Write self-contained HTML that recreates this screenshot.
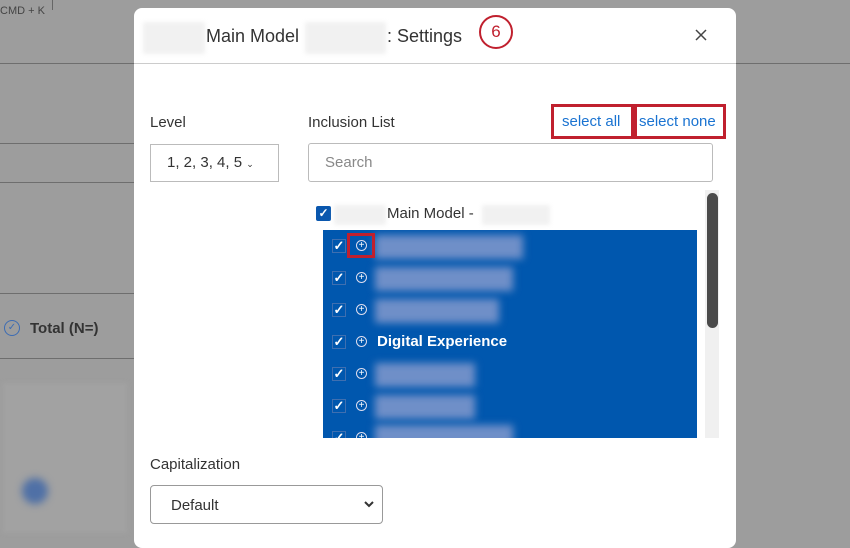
<!DOCTYPE html>
<html><head><style>
*{box-sizing:border-box;margin:0;padding:0}
body{width:850px;height:533px;overflow:hidden;background:#9d9d9d;font-family:"Liberation Sans",sans-serif;position:relative;color:#333}
.a{position:absolute}
.hl{position:absolute;height:1px;background:#6e6e6e}
.blur{position:absolute;background:#f1f1f1;filter:blur(2px)}
.modal{position:absolute;left:134px;top:8px;width:602px;height:540px;background:#fff;border-radius:8px}
.row{position:absolute;left:0;height:32px;width:374px}
.cb{position:absolute;left:9px;width:14px;height:14px;border:1px solid #3f6fb0;color:#fff;font-size:13px;line-height:12px;text-align:center;font-weight:bold}
.pl{position:absolute;left:33px;width:11px;height:11px;border:1px solid #dde;border-radius:50%;color:#fff;font-size:10px;line-height:9px;text-align:center}
.bt{position:absolute;left:52px;height:24px;background:#6f8fc8;filter:blur(4px)}
</style></head><body>
<div class="a" style="left:0;top:5px;font-size:11px;color:#444">CMD + K</div>
<div class="a" style="left:52px;top:0;width:1px;height:10px;background:#666"></div>
<div class="hl" style="left:0;top:63px;width:850px"></div>
<div class="hl" style="left:0;top:143px;width:134px"></div>
<div class="hl" style="left:0;top:182px;width:134px"></div>
<div class="hl" style="left:0;top:293px;width:134px"></div>
<div class="hl" style="left:0;top:358px;width:134px"></div>
<div class="a" style="left:4px;top:320px;width:16px;height:16px;border:1.5px solid #3d6cb3;border-radius:50%;color:#3d6cb3;font-size:10px;line-height:13px;text-align:center">✓</div>
<div class="a" style="left:30px;top:320px;font-size:15px;font-weight:bold;color:#333">Total (N=)</div>
<div class="a" style="left:3px;top:383px;width:124px;height:150px;background:#a2a2a2;filter:blur(2px)"></div>
<div class="a" style="left:22px;top:478px;width:26px;height:26px;border-radius:50%;background:#4f70a6;filter:blur(4px)"></div>
<div class="modal">
 <div class="blur" style="left:9px;top:14px;width:62px;height:32px"></div>
 <div class="a" style="left:72px;top:18px;font-size:18px;color:#333">Main Model</div>
 <div class="blur" style="left:171px;top:14px;width:81px;height:32px"></div>
 <div class="a" style="left:253px;top:18px;font-size:18px;color:#333">: Settings</div>
 <div class="a" style="left:345px;top:7px;width:34px;height:34px;border:2px solid #c0202e;border-radius:50%;color:#c0202e;font-size:17px;text-align:center;line-height:30px">6</div>
 <svg class="a" style="left:561px;top:21px" width="12" height="12"><path d="M1 1L11 11M11 1L1 11" stroke="#444" stroke-width="1.5"/></svg>
 <div class="a" style="left:0;top:55px;width:602px;height:1px;background:#ccc"></div>
 <div class="a" style="left:16px;top:106px;font-size:15px;color:#333">Level</div>
 <div class="a" style="left:16px;top:136px;width:129px;height:38px;border:1px solid #bbb;font-size:15px;padding:9px 0 0 16px;color:#333">1, 2, 3, 4, 5 <span style="font-size:9px">⌄</span></div>
 <div class="a" style="left:174px;top:106px;font-size:15px;color:#333">Inclusion List</div>
 <div class="a" style="left:417px;top:96px;width:83px;height:35px;border:3px solid #c0202e;color:#1a73d1;font-size:15px;padding:6px 0 0 8px">select all</div>
 <div class="a" style="left:500px;top:96px;width:92px;height:35px;border:3px solid #c0202e;color:#1a73d1;font-size:15px;padding:6px 0 0 2px;white-space:nowrap">select none</div>
 <div class="a" style="left:174px;top:135px;width:405px;height:39px;border:1px solid #bbb;border-radius:3px;font-size:15px;color:#888;padding:10px 0 0 16px">Search</div>
 <div class="a" style="left:182px;top:198px;width:15px;height:15px;background:#0a57ae;border-radius:2px;color:#fff;font-size:12px;line-height:15px;text-align:center;font-weight:bold">✓</div>
 <div class="blur" style="left:200px;top:197px;width:52px;height:20px"></div>
 <div class="a" style="left:253px;top:197px;font-size:15px;color:#333">Main Model -</div>
 <div class="blur" style="left:348px;top:197px;width:68px;height:20px"></div>
 <div class="a" style="left:571px;top:182px;width:14px;height:248px;background:#f0f0f0"></div>
 <div class="a" style="left:573px;top:185px;width:11px;height:135px;background:#4a4a4a;border-radius:6px"></div>
 <div class="a" style="left:189px;top:222px;width:374px;height:208px;background:#0057ae;overflow:hidden">
  <div class="row" style="top:0"><div class="cb" style="top:9px">✓</div><div class="pl" style="top:10px">+</div><div class="bt" style="top:5px;width:148px"></div></div>
  <div class="row" style="top:32px"><div class="cb" style="top:9px">✓</div><div class="pl" style="top:10px">+</div><div class="bt" style="top:5px;width:138px"></div></div>
  <div class="row" style="top:64px"><div class="cb" style="top:9px">✓</div><div class="pl" style="top:10px">+</div><div class="bt" style="top:5px;width:124px"></div></div>
  <div class="row" style="top:96px"><div class="cb" style="top:9px">✓</div><div class="pl" style="top:10px">+</div><div class="a" style="left:54px;top:7px;color:#fff;font-size:15px;font-weight:bold">Digital Experience</div></div>
  <div class="row" style="top:128px"><div class="cb" style="top:9px">✓</div><div class="pl" style="top:10px">+</div><div class="bt" style="top:5px;width:100px"></div></div>
  <div class="row" style="top:160px"><div class="cb" style="top:9px">✓</div><div class="pl" style="top:10px">+</div><div class="bt" style="top:5px;width:100px"></div></div>
  <div class="row" style="top:192px"><div class="cb" style="top:9px">✓</div><div class="pl" style="top:10px">+</div><div class="bt" style="top:3px;width:138px"></div></div>
 </div>
 <div class="a" style="left:213px;top:225px;width:28px;height:25px;border:3px solid #c0202e"></div>
 <div class="a" style="left:16px;top:448px;font-size:15px;color:#333">Capitalization</div>
 <div class="a" style="left:16px;top:477px;width:233px;height:39px;border:1px solid #999;border-radius:4px;font-size:15px;padding:11px 0 0 20px;color:#333">Default<svg style="position:absolute;right:8px;top:15px" width="10" height="7"><path d="M1 1L5 5L9 1" stroke="#333" stroke-width="2" fill="none"/></svg></div>
</div>
</body></html>
